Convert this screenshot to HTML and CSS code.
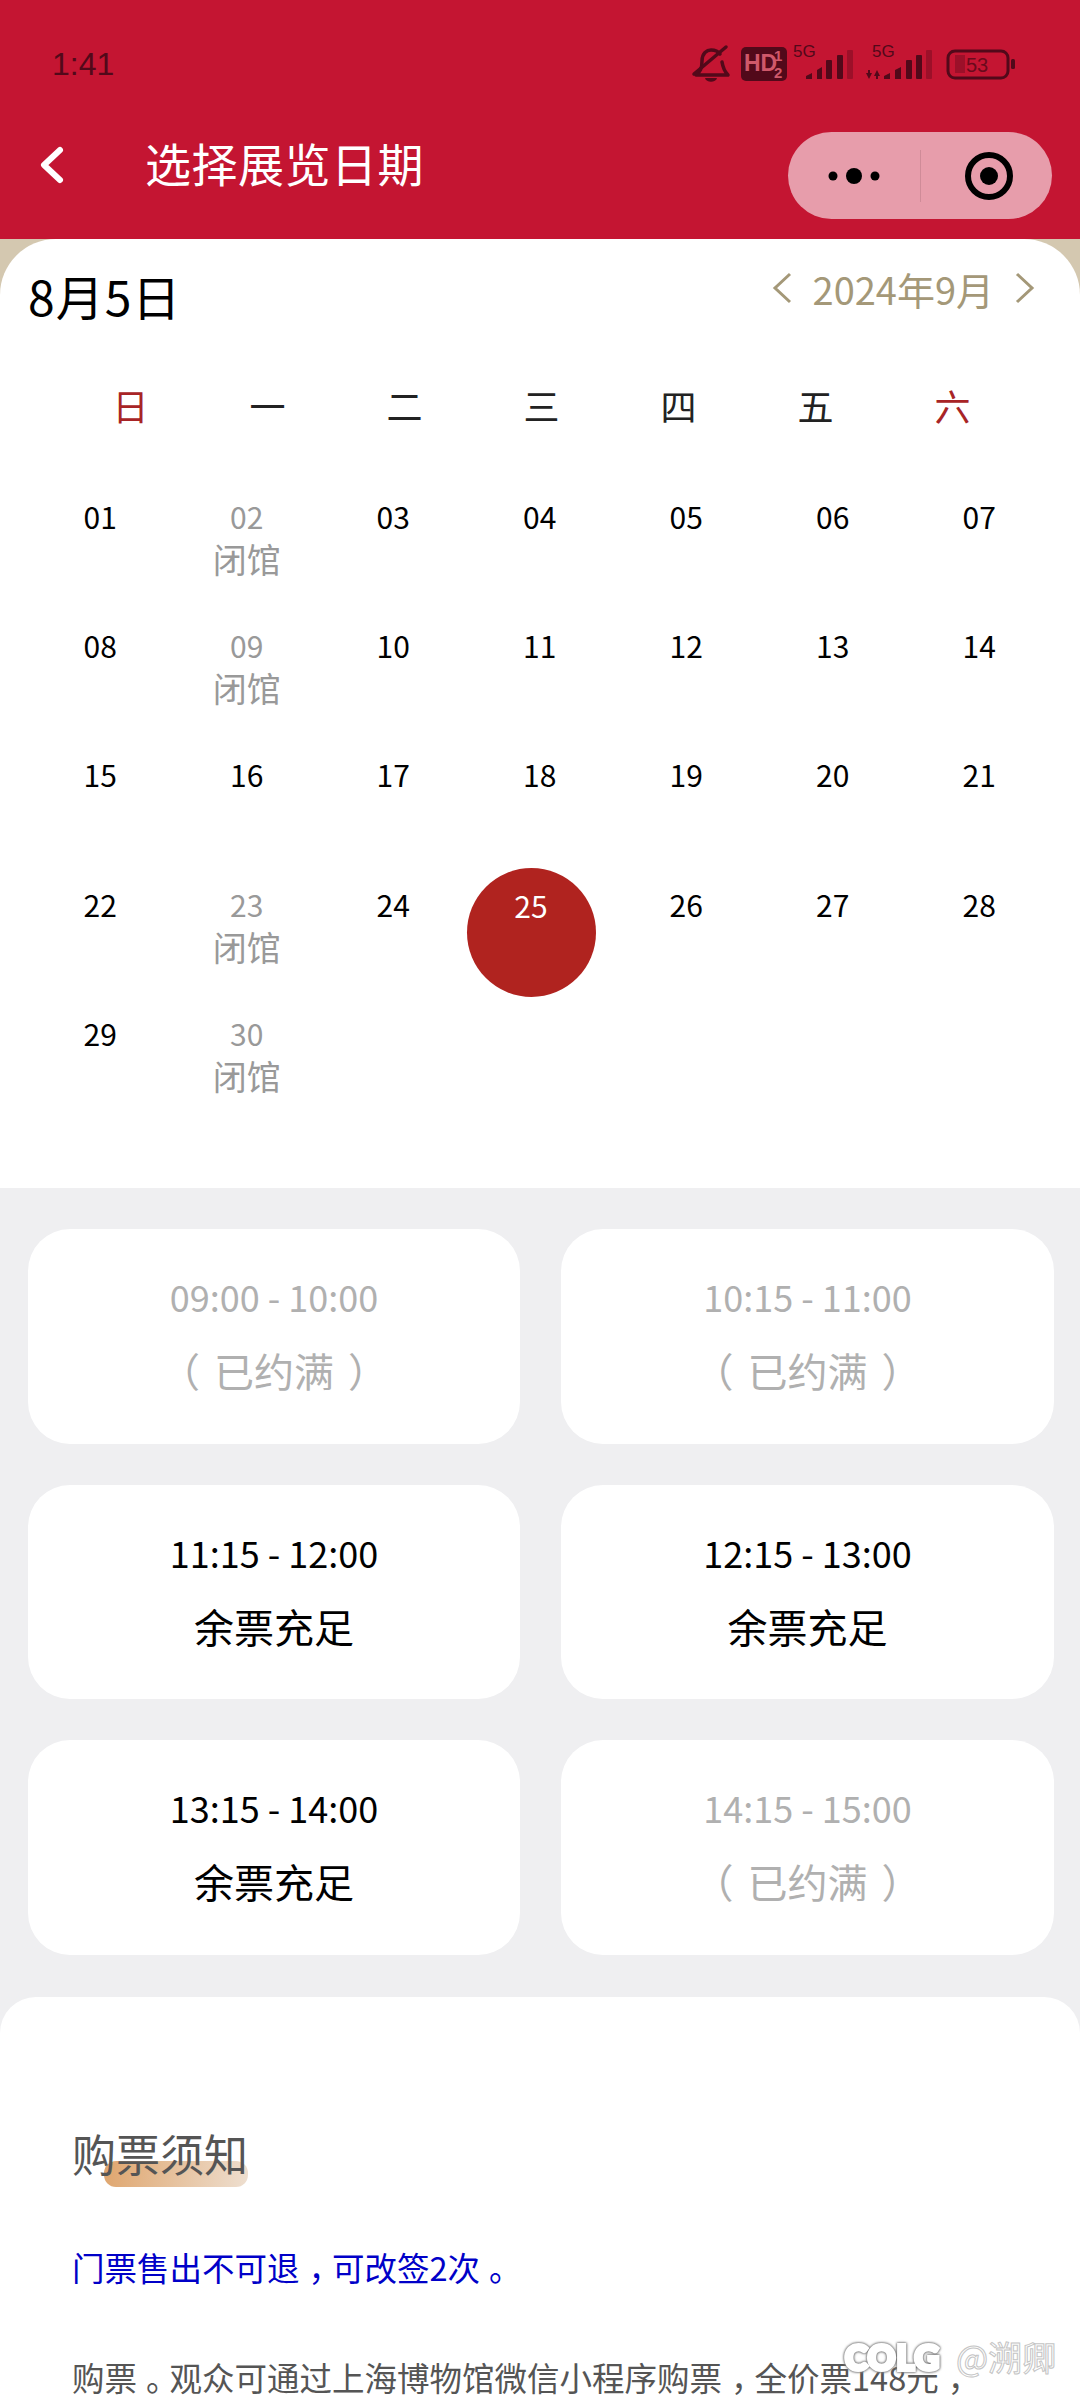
FILE: index.html
```html
<!DOCTYPE html>
<html lang="zh-CN">
<head>
<meta charset="utf-8">
<title>选择展览日期</title>
<link rel="stylesheet" href="styles.css">
</head>
<body>
<div class="page">
  <header class="top">
    <div class="status">
      <span class="time">1:41</span>
      <svg class="status-icons" width="330" height="48" viewBox="0 0 330 48">
        <g fill="none" stroke="#52091a" stroke-width="3.5" stroke-linecap="round" stroke-linejoin="round">
          <path d="M6 35c4-3 6-6 6-14 0-8 5-11 9-11 4 0 7 1 9 4M32 22c1 6 3 10 6 13H6"/>
          <path d="M4 34 36 7"/>
        </g>
        <path d="M15 38h12c-1 5-11 5-12 0z" fill="#52091a"/>
        <rect x="51" y="7" width="46" height="34" rx="5" fill="#52091a"/>
        <text x="54" y="31" class="hd">HD</text>
        <text x="84" y="21" class="hd-small">1</text>
        <text x="84" y="38" class="hd-small">2</text>
        <text x="103" y="17" class="five-g">5G</text>
        <text x="182" y="17" class="five-g">5G</text>
        <g fill="#52091a">
          <path d="M116 39v-3l6-3v6z"/>
          <path d="M127 39v-9l5-3v12z"/>
          <rect x="136" y="20" width="6" height="19" rx="1"/>
          <rect x="147" y="15" width="6" height="24" rx="1"/>
          <path d="M176 33h2v-3h2v3h2l-3 6z"/>
          <path d="M184 36h2v3h2v-3h2l-3-6z"/>
          <path d="M194 39v-3l6-3v6z"/>
          <path d="M205 39v-9l6-3v12z"/>
          <rect x="216" y="20" width="6" height="19" rx="1"/>
          <rect x="226" y="15" width="6" height="24" rx="1"/>
          <rect x="321" y="19" width="4" height="10" rx="1.5"/>
        </g>
        <g fill="#9c1029">
          <rect x="157" y="10" width="6" height="29" rx="1"/>
          <rect x="236" y="10" width="6" height="29" rx="1"/>
          <rect x="265" y="15" width="10" height="18"/>
        </g>
        <rect x="258" y="11" width="60" height="27" rx="7" fill="none" stroke="#52091a" stroke-width="3"/>
        <text x="276" y="32" class="batt">53</text>
      </svg>
    </div>
    <div class="nav">
      <svg class="back" width="28" height="40" viewBox="0 0 28 40"><path d="M22 5 6 20l16 15" fill="none" stroke="#fff" stroke-width="6" stroke-linecap="round" stroke-linejoin="round"/></svg>
      <h1 class="nav-title">选择展览日期</h1>
      <div class="capsule">
        <svg width="52" height="16" viewBox="0 0 52 16"><circle cx="5" cy="8" r="4.5"/><circle cx="26" cy="8" r="8"/><circle cx="47" cy="8" r="4.5"/></svg>
        <span class="capsule-line"></span>
        <svg width="48" height="48" viewBox="0 0 48 48"><circle cx="24" cy="24" r="21" fill="none" stroke="#000" stroke-width="6"/><circle cx="24" cy="24" r="9"/></svg>
      </div>
    </div>
  </header>

  <main class="content">
    <div class="cal-backdrop">
      <section class="calendar">
        <div class="cal-head">
          <div class="picked">8月5日</div>
          <div class="month">
            <svg width="22" height="34" viewBox="0 0 22 34"><path d="M19 3 4 17l15 14" fill="none" stroke="#a49878" stroke-width="3"/></svg>
            <span>2024年9月</span>
            <svg width="22" height="34" viewBox="0 0 22 34"><path d="M3 3l15 14L3 31" fill="none" stroke="#a49878" stroke-width="3"/></svg>
          </div>
        </div>
        <div class="weeks">
          <span class="red">日</span><span>一</span><span>二</span><span>三</span><span>四</span><span>五</span><span class="red">六</span>
        </div>
        <div class="days">
          <div class="day"><b>01</b></div>
          <div class="day closed"><b>02</b><i>闭馆</i></div>
          <div class="day"><b>03</b></div>
          <div class="day"><b>04</b></div>
          <div class="day"><b>05</b></div>
          <div class="day"><b>06</b></div>
          <div class="day"><b>07</b></div>
          <div class="day"><b>08</b></div>
          <div class="day closed"><b>09</b><i>闭馆</i></div>
          <div class="day"><b>10</b></div>
          <div class="day"><b>11</b></div>
          <div class="day"><b>12</b></div>
          <div class="day"><b>13</b></div>
          <div class="day"><b>14</b></div>
          <div class="day"><b>15</b></div>
          <div class="day"><b>16</b></div>
          <div class="day"><b>17</b></div>
          <div class="day"><b>18</b></div>
          <div class="day"><b>19</b></div>
          <div class="day"><b>20</b></div>
          <div class="day"><b>21</b></div>
          <div class="day"><b>22</b></div>
          <div class="day closed"><b>23</b><i>闭馆</i></div>
          <div class="day"><b>24</b></div>
          <div class="day selected"><b>25</b></div>
          <div class="day"><b>26</b></div>
          <div class="day"><b>27</b></div>
          <div class="day"><b>28</b></div>
          <div class="day"><b>29</b></div>
          <div class="day closed"><b>30</b><i>闭馆</i></div>
        </div>
      </section>
    </div>

    <section class="slots">
      <div class="slot full"><div class="slot-time">09:00 - 10:00</div><div class="slot-state">（ 已约满 ）</div></div>
      <div class="slot full"><div class="slot-time">10:15 - 11:00</div><div class="slot-state">（ 已约满 ）</div></div>
      <div class="slot"><div class="slot-time">11:15 - 12:00</div><div class="slot-state">余票充足</div></div>
      <div class="slot"><div class="slot-time">12:15 - 13:00</div><div class="slot-state">余票充足</div></div>
      <div class="slot"><div class="slot-time">13:15 - 14:00</div><div class="slot-state">余票充足</div></div>
      <div class="slot full"><div class="slot-time">14:15 - 15:00</div><div class="slot-state">（ 已约满 ）</div></div>
    </section>

    <section class="notice">
      <h2 class="notice-title"><span>购票须知</span></h2>
      <p class="notice-blue">门票售出不可退<span class="punct">，</span>可改签2次<span class="punct">。</span></p>
      <p class="notice-body">购票<span class="punct">。</span>观众可通过上海博物馆微信小程序购票<span class="punct">，</span>全价票148元<span class="punct">，</span></p>
    </section>
  </main>

  <div class="watermark"><span class="wm-logo">COLG</span><span class="wm-name">@溯卿</span></div>
</div>
</body>
</html>
```
FILE: styles.css
```css
* { box-sizing: border-box; }
html, body { margin: 0; padding: 0; }
body {
  width: 1080px;
  height: 2400px;
  overflow: hidden;
  background: #efeff1;
  font-family: "Noto Sans CJK SC", "Noto Sans", sans-serif;
  color: #000;
}
.page { position: relative; width: 1080px; height: 2400px; overflow: hidden; }

.top { height: 239px; background: #c41532; }
.status { display: flex; justify-content: space-between; align-items: center; height: 96px; padding: 32px 60px 0 52px; }
.time { font-size: 32px; color: #52091a; font-family: "Liberation Sans", sans-serif; }
.status-icons { display: block; }
.status-icons .hd { font: 700 23px "Liberation Sans", sans-serif; fill: #d0586a; }
.status-icons .hd-small { font: 700 15px "Liberation Sans", sans-serif; fill: #d0586a; }
.status-icons .five-g { font: 400 17px "Liberation Sans", sans-serif; fill: #52091a; }
.status-icons .batt { font: 400 20px "Liberation Sans", sans-serif; fill: #6a0a1c; }

.nav { display: flex; align-items: center; height: 87px; margin-top: 36px; padding: 0 28px 0 38px; }
.back { flex: none; margin-bottom: 22px; }
.nav-title { margin: 0 0 27px 79px; font-size: 46px; font-weight: 400; color: #fff; line-height: 1; flex: 1; letter-spacing: .5px; }
.capsule { display: flex; align-items: center; flex: none; width: 264px; height: 87px; border-radius: 44px; background: #e79dab; padding-left: 40px; }
.capsule svg { flex: none; }
.capsule-line { width: 1px; height: 52px; background: #cf8b98; margin: 0 44px 0 40px; }

.cal-backdrop { background: #d4c8b0; }
.calendar { background: #fff; border-radius: 56px 56px 0 0; height: 949px; padding-top: 28px; }
.cal-head { display: flex; justify-content: space-between; align-items: center; height: 56px; padding: 0 44px 0 28px; }
.picked { font-size: 48px; line-height: 56px; letter-spacing: 1px; }
.month { display: flex; align-items: center; gap: 20px; margin-bottom: 14px; font-size: 38px; color: #a49878; }
.weeks { display: grid; grid-template-columns: repeat(7, 137px); padding-left: 62px; margin-top: 54px; font-size: 36px; line-height: 56px; text-align: center; color: #222; }
.weeks .red { color: #a82426; }
.days { display: grid; grid-template-columns: repeat(7, 146.5px); grid-auto-rows: 129.2px; padding-left: 27px; margin-top: 55px; }
.day { display: flex; flex-direction: column; align-items: center; text-align: center; }
.day b { font-weight: 400; font-size: 30px; line-height: 40px; margin-top: 8px; }
.day i { font-style: normal; font-size: 34px; line-height: 44px; margin-top: 1px; color: #999; }
.day.closed b { color: #999; }
.day.selected { justify-self: start; align-self: start; width: 129px; height: 129px; margin-top: -8px; border-radius: 50%; background: #b0231f; color: #fff; }
.day.selected b { color: #fff; margin-top: 17px; }

.slots { display: grid; grid-template-columns: 492px 493px; grid-auto-rows: 214.5px; gap: 41px; padding: 41px 26px 42px 28px; }
.slot { background: #fff; border-radius: 42px; display: flex; flex-direction: column; align-items: center; padding-top: 45px; }
.slot-time { font-size: 36px; line-height: 44px; }
.slot-state { font-size: 40px; line-height: 56px; margin-top: 24px; word-spacing: 5px; }
.slot.full .slot-time, .slot.full .slot-state { color: #b0b0b0; }

.notice { background: #fff; border-radius: 36px 36px 0 0; height: 410px; padding: 128px 72px 0; }
.notice-title { margin: 0; font-size: 44px; font-weight: 400; line-height: 56px; color: #555; }
.notice-title span { position: relative; display: inline-block; z-index: 0; }
.notice-title span::after { content: ""; position: absolute; z-index: -1; left: 32px; right: 0; top: 36px; height: 26px; border-radius: 12px; background: linear-gradient(100deg, #dfa56d, #eedfd0); }
.notice-blue { margin: 64px 0 0; font-size: 32.5px; line-height: 44px; color: #0000c8; }
.notice-body { margin: 66px 0 0; font-size: 32.5px; line-height: 44px; color: #555; white-space: nowrap; }
.punct { display: inline-block; transform: translateX(9px); }

.watermark { position: absolute; left: 845px; top: 2340px; display: flex; align-items: center; gap: 16px; color: #fff; }
.wm-logo { font: 900 34px/1 "Lato", sans-serif; letter-spacing: 1px; -webkit-text-stroke: 4px #fff; filter: drop-shadow(0 0 1px #666) drop-shadow(0 0 1px #999); }
.wm-name { font-size: 34px; line-height: 1; -webkit-text-stroke: 1px #c4c4c4; }
```
